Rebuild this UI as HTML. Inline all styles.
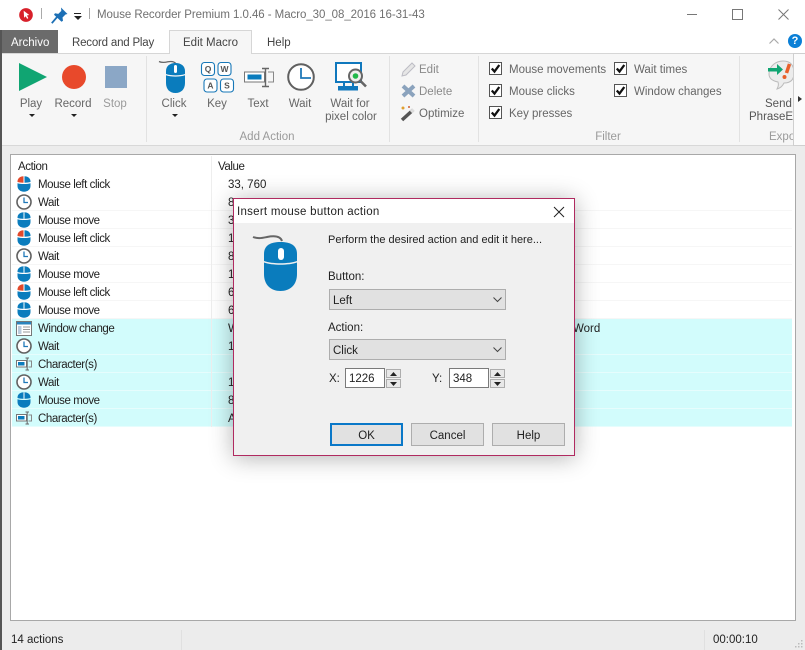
<!DOCTYPE html>
<html><head><meta charset="utf-8"><style>
html,body{margin:0;padding:0}
body{width:805px;height:650px;overflow:hidden;position:relative;background:#ececec;font-family:"Liberation Sans",sans-serif;font-size:11.5px;color:#222}
.t{position:absolute;white-space:nowrap;line-height:14px;margin-top:1px}
.r{font-size:11.5px;letter-spacing:-.42px}
.d{font-size:11px}
.b{position:absolute;box-sizing:border-box}
.c{text-align:center;transform:translateX(-50%)}
.g{color:#666}
.gl{color:#9a9a9a}
svg{position:absolute;overflow:visible}
</style></head><body>
<svg width="0" height="0" style="position:absolute"><defs>
<symbol id="m" viewBox="0 0 14 16"><path d="M.5 6V5.500C.5 2.500 3 .3 7 .3s6.500 2.200 6.500 5.200V6C10 7 4 7 .5 6z" fill="#0a7cbd"/><path d="M.5 7.200c3.500 1 9.500 1 13 0V10c0 3.500-2.900 5.700-6.500 5.700S.5 13.500.5 10z" fill="#0a7cbd"/><rect x="6.500" y=".3" width="1" height="6.500" fill="#fff"/></symbol>
<symbol id="ml" viewBox="0 0 14 16"><path d="M.5 6V5.500C.5 2.500 3 .3 6.500.3V6.700C4 6.700 2 6.400.5 6z" fill="#e2492b"/><path d="M7.500.3C11 .3 13.500 2.500 13.500 5.500V6C12 6.400 10 6.700 7.500 6.700z" fill="#0a7cbd"/><path d="M.5 7.200c3.500 1 9.500 1 13 0V10c0 3.500-2.900 5.700-6.500 5.700S.5 13.500.5 10z" fill="#0a7cbd"/></symbol>
<symbol id="w" viewBox="0 0 16 16"><circle cx="8" cy="8" r="7" fill="#fff" stroke="#606060" stroke-width="1.600"/><path d="M8 3.500V8.500H12" fill="none" stroke="#1f78b8" stroke-width="1.300"/></symbol>
<symbol id="ch" viewBox="0 0 16 14"><rect x=".5" y="3.500" width="10" height="6.500" fill="#fff" stroke="#777"/><rect x="2" y="5" width="6.500" height="3.500" fill="#0a7cbd"/><path d="M9.500 1H13M9.500 13H13M11.200 1V13" stroke="#666" fill="none"/><path d="M12.500 4H15.500V10H12.500" stroke="#888" fill="none"/></symbol>
<symbol id="wc" viewBox="0 0 16 15"><rect x=".5" y=".5" width="15" height="14" fill="#fff" stroke="#777"/><rect x="1" y="1" width="14" height="2.500" fill="#2a84bd"/><rect x="2" y="5" width="3.500" height="8" fill="#bcd"/><path d="M7 6H14M7 8.500H14M7 11H14" stroke="#999"/></symbol>
</defs></svg>

<!-- title bar -->
<div class="b" style="left:0;top:0;width:805px;height:53px;background:#fff"></div>
<svg style="left:19px;top:8px" width="14" height="14" viewBox="0 0 15 15"><circle cx="7.500" cy="7.500" r="7.300" fill="#d8202a"/><path d="M5 3l6 4.500-2.500.6 1.500 2.800-1.300.7-1.500-2.800L5.500 10.500z" fill="#fff"/></svg>
<div class="b" style="left:41px;top:8px;width:1px;height:11px;background:#aaa"></div>
<svg style="left:51px;top:7px" width="17" height="17" viewBox="0 0 17 17"><path d="M.8 16.200L6.500 9.500" stroke="#1c6fb5" stroke-width="1.800"/><path d="M10 .5l6.500 6.500-2 .5-3 3 .5 3.300-1.500 1L3 7.800l1-1.500 3.300.6 3-3z" fill="#1c6fb5"/></svg>
<div class="b" style="left:74px;top:13px;width:7px;height:1px;background:#222"></div>
<svg style="left:74px;top:16px" width="8" height="4"><path d="M0 0H8L4 4z" fill="#222"/></svg>
<div class="b" style="left:89px;top:8px;width:1px;height:11px;background:#aaa"></div>
<div class="t" style="left:97px;top:7px;font-size:11.5px;color:#707070;letter-spacing:-.06px">Mouse Recorder Premium 1.0.46 - Macro_30_08_2016 16-31-43</div>
<div class="b" style="left:687px;top:14px;width:10px;height:1px;background:#777"></div>
<div class="b" style="left:732px;top:9px;width:11px;height:11px;border:1px solid #777"></div>
<svg style="left:778px;top:9px" width="11" height="11"><path d="M.5.500L10.500 10.500M10.500.500L.5 10.500" stroke="#777" fill="none"/></svg>

<!-- tabs -->
<div class="b" style="left:2px;top:30px;width:56px;height:23px;background:#6b6b6b"></div>
<div class="t" style="left:11px;top:35px;color:#fff">Archivo</div>
<div class="t" style="left:72px;top:35px;color:#444;letter-spacing:-.2px">Record and Play</div>
<div class="b" style="left:169px;top:30px;width:83px;height:24px;background:#f6f6f6;border:1px solid #d6d6d6;border-bottom:none;z-index:2"></div>
<div class="t" style="left:183px;top:35px;color:#444;z-index:3">Edit Macro</div>
<div class="t" style="left:267px;top:35px;color:#444">Help</div>
<svg style="left:769px;top:38px" width="10" height="6"><path d="M.5 5.500L5 1l4.500 4.500" stroke="#aaa" fill="none" stroke-width="1.200"/></svg>
<div class="b" style="left:788px;top:34px;width:14px;height:14px;border-radius:50%;background:#0a7fd6;color:#fff;font-size:11px;font-weight:bold;line-height:14px;text-align:center">?</div>

<!-- ribbon -->
<div class="b" style="left:2px;top:53px;width:803px;height:93px;background:#f6f6f6;border-top:1px solid #d6d6d6;border-bottom:1px solid #d8d8d8"></div>
<div class="b" style="left:146px;top:56px;width:1px;height:86px;background:#e2e2e2"></div>
<div class="b" style="left:389px;top:56px;width:1px;height:86px;background:#e2e2e2"></div>
<div class="b" style="left:478px;top:56px;width:1px;height:86px;background:#e2e2e2"></div>
<div class="b" style="left:739px;top:56px;width:1px;height:86px;background:#e2e2e2"></div>

<svg style="left:19px;top:63px" width="28" height="28"><path d="M0 0L28 14L0 28z" fill="#10a572"/></svg>
<div class="b" style="left:62px;top:65px;width:24px;height:24px;border-radius:50%;background:#e8492b"></div>
<div class="b" style="left:105px;top:66px;width:22px;height:22px;background:#8ba7c6"></div>
<div class="t c g" style="left:31px;top:96px">Play</div>
<div class="t c g" style="left:73px;top:96px">Record</div>
<div class="t c gl" style="left:115px;top:96px">Stop</div>
<svg style="left:29px;top:114px" width="6" height="3"><path d="M0 0H6L3 3z" fill="#222"/></svg>
<svg style="left:71px;top:114px" width="6" height="3"><path d="M0 0H6L3 3z" fill="#222"/></svg>

<!-- click icon -->
<svg style="left:159px;top:60px" width="28" height="34" viewBox="0 0 28 34"><path d="M0 1.500c3 1.500 6 1 9 .3 3-.6 6-.6 8 2" fill="none" stroke="#666" stroke-width="1.300"/><path d="M7 14V11C7 6 11 3 16.500 3S26 6 26 11v3c-5 1.800-14 1.800-19 0z" fill="#0a7cbd"/><path d="M7 15.300c5 1.800 14 1.800 19 0V23c0 6.500-4 10-9.500 10S7 29.500 7 23z" fill="#0a7cbd"/><rect x="15" y="5" width="3" height="8" rx="1.500" fill="#fff"/></svg>
<div class="t c g" style="left:174px;top:96px">Click</div>
<svg style="left:172px;top:114px" width="6" height="3"><path d="M0 0H6L3 3z" fill="#222"/></svg>

<!-- key -->
<svg style="left:201px;top:62px" width="33" height="31" viewBox="0 0 33 31" font-family="Liberation Sans" font-size="8.500" font-weight="bold" fill="#555" text-anchor="middle">
<g fill="#fff" stroke="#1878b8" stroke-width="1.100"><rect x=".5" y=".5" width="13" height="13" rx="3"/><rect x="17" y=".5" width="13" height="13" rx="3"/><rect x="3" y="17" width="13" height="13" rx="3"/><rect x="19.500" y="17" width="13" height="13" rx="3"/></g>
<text x="7" y="10">Q</text><text x="23.500" y="10">W</text><text x="9.500" y="26.500">A</text><text x="26" y="26.500">S</text></svg>
<div class="t c g" style="left:217px;top:96px">Key</div>

<!-- text -->
<svg style="left:244px;top:68px" width="31" height="20" viewBox="0 0 31 20"><rect x=".5" y="4" width="20" height="10" fill="#fff" stroke="#777"/><rect x="3.500" y="6.500" width="14" height="5" fill="#0a7cbd"/><path d="M18 .5H25M18 18.500H25M21.500.5V18.500" stroke="#666" fill="none" stroke-width="1.400"/><path d="M24 4H29.500V14H24" stroke="#888" fill="none"/></svg>
<div class="t c g" style="left:258px;top:96px">Text</div>

<!-- wait -->
<svg style="left:287px;top:63px" width="28" height="28" viewBox="0 0 28 28"><circle cx="14" cy="14" r="12.800" fill="#fff" stroke="#606060" stroke-width="2"/><path d="M14 5V15H24" fill="none" stroke="#1f78b8" stroke-width="1.800"/></svg>
<div class="t c g" style="left:300px;top:96px">Wait</div>

<!-- pixel -->
<svg style="left:335px;top:62px" width="33" height="29" viewBox="0 0 33 29"><rect x="1" y="1" width="25" height="19" fill="#fff" stroke="#1078bd" stroke-width="2"/><path d="M9 20v4M18 20v4" stroke="#1078bd" stroke-width="2"/><rect x="3" y="24" width="20" height="4.500" fill="#1078bd"/><circle cx="20.500" cy="14" r="6.500" fill="#eee" stroke="#666" stroke-width="2"/><circle cx="20.500" cy="14" r="2.800" fill="#1fb84a"/><path d="M25.500 19l5.500 5.500" stroke="#666" stroke-width="2.600"/></svg>
<div class="t c g" style="left:350px;top:96px">Wait for</div>
<div class="t c g" style="left:351px;top:109px">pixel color</div>
<div class="t c gl" style="left:267px;top:129px">Add Action</div>

<!-- edit group -->
<svg style="left:401px;top:62px" width="15" height="15"><path d="M1 14l1-4L11 1l3 3-9 9z" fill="#e6e6e6" stroke="#bcbcc4"/></svg>
<div class="t gl" style="left:419px;top:62px;color:#8a8a8a">Edit</div>
<svg style="left:401px;top:84px" width="15" height="14"><path d="M2 2L13 12M13 2L2 12" stroke="#8ba3bd" stroke-width="4"/></svg>
<div class="t" style="left:419px;top:84px;color:#8a8a8a">Delete</div>
<svg style="left:400px;top:105px" width="16" height="16"><path d="M2 15L13 5" stroke="#555" stroke-width="3.500"/><path d="M11 7L13.500 4.500" stroke="#ddd" stroke-width="3.500"/><circle cx="3" cy="3" r="1.500" fill="#e0a030"/><circle cx="9" cy="2" r="1" fill="#d06030"/></svg>
<div class="t g" style="left:419px;top:106px">Optimize</div>

<!-- checks -->
<div class="b" style="left:489px;top:62px;width:13px;height:13px;background:#fff;border:1px solid #555"><svg width="11" height="11" style="left:0;top:0"><path d="M1.800 5.500L4.500 8.500L9.300 2" stroke="#111" stroke-width="2.300" fill="none"/></svg></div>
<div class="t g" style="left:509px;top:62px">Mouse movements</div>
<div class="b" style="left:489px;top:84px;width:13px;height:13px;background:#fff;border:1px solid #555"><svg width="11" height="11" style="left:0;top:0"><path d="M1.800 5.500L4.500 8.500L9.300 2" stroke="#111" stroke-width="2.300" fill="none"/></svg></div>
<div class="t g" style="left:509px;top:84px">Mouse clicks</div>
<div class="b" style="left:489px;top:106px;width:13px;height:13px;background:#fff;border:1px solid #555"><svg width="11" height="11" style="left:0;top:0"><path d="M1.800 5.500L4.500 8.500L9.300 2" stroke="#111" stroke-width="2.300" fill="none"/></svg></div>
<div class="t g" style="left:509px;top:106px">Key presses</div>
<div class="b" style="left:614px;top:62px;width:13px;height:13px;background:#fff;border:1px solid #555"><svg width="11" height="11" style="left:0;top:0"><path d="M1.800 5.500L4.500 8.500L9.300 2" stroke="#111" stroke-width="2.300" fill="none"/></svg></div>
<div class="t g" style="left:634px;top:62px">Wait times</div>
<div class="b" style="left:614px;top:84px;width:13px;height:13px;background:#fff;border:1px solid #555"><svg width="11" height="11" style="left:0;top:0"><path d="M1.800 5.500L4.500 8.500L9.300 2" stroke="#111" stroke-width="2.300" fill="none"/></svg></div>
<div class="t g" style="left:634px;top:84px">Window changes</div>
<div class="t c gl" style="left:608px;top:129px">Filter</div>

<!-- export -->
<svg style="left:768px;top:60px" width="26" height="32" viewBox="0 0 26 32"><path d="M1 14C1 6 8 1 15 1s11 4 11 12-5 10-10 10c-1 2-3 5-7 6 1-2 2-4 1-7-5-1-9-3-9-8z" fill="#ececec" stroke="#bbb"/><path d="M0 8h9V4l6 5.500-6 5.500v-3.500H0z" fill="#10a572"/><path d="M21.500 4l-3 9" stroke="#e8602b" stroke-width="3.500"/><circle cx="16.500" cy="17" r="2" fill="#e8602b"/></svg>
<div class="t" style="left:765px;top:96px;color:#555">Send</div>
<div class="t" style="left:749px;top:109px;color:#555">PhraseEx</div>
<div class="t gl" style="left:769px;top:129px">Expo</div>
<div class="b" style="left:793px;top:53px;width:12px;height:93px;background:#fbfbfb;border:1px solid #cfcfcf;border-right:none"></div>
<svg style="left:798px;top:96px" width="4" height="6"><path d="M0 0L4 3L0 6z" fill="#333"/></svg>

<!-- table -->
<div class="b" style="left:10px;top:154px;width:786px;height:467px;background:#fff;border:1px solid #a8a8a8"></div>
<div class="t r" style="left:18px;top:159px">Action</div>
<div class="t r" style="left:218px;top:159px">Value</div>
<div class="b" style="left:12px;top:319px;width:780px;height:108px;background:#d2fcfc"></div>
<div class="b" style="left:12px;top:193px;width:780px;height:126px;background:repeating-linear-gradient(#fff 0,#fff 17px,#f6f6f6 17px,#f6f6f6 18px)"></div>
<div class="b" style="left:12px;top:337px;width:780px;height:90px;background:repeating-linear-gradient(transparent 0,transparent 17px,#e6fdfd 17px,#e6fdfd 18px)"></div>
<div class="b" style="left:211px;top:156px;width:1px;height:271px;background:#eee"></div>

<svg style="left:17px;top:176px" width="14" height="16"><use href="#ml"/></svg><div class="t r" style="left:38px;top:177px">Mouse left click</div><div class="t" style="left:228px;top:177px">33, 760</div>
<svg style="left:16px;top:194px" width="16" height="16"><use href="#w"/></svg><div class="t r" style="left:38px;top:195px">Wait</div><div class="t" style="left:228px;top:195px">8</div>
<svg style="left:17px;top:212px" width="14" height="16"><use href="#m"/></svg><div class="t r" style="left:38px;top:213px">Mouse move</div><div class="t" style="left:228px;top:213px">3</div>
<svg style="left:17px;top:230px" width="14" height="16"><use href="#ml"/></svg><div class="t r" style="left:38px;top:231px">Mouse left click</div><div class="t" style="left:228px;top:231px">1</div>
<svg style="left:16px;top:248px" width="16" height="16"><use href="#w"/></svg><div class="t r" style="left:38px;top:249px">Wait</div><div class="t" style="left:228px;top:249px">8</div>
<svg style="left:17px;top:266px" width="14" height="16"><use href="#m"/></svg><div class="t r" style="left:38px;top:267px">Mouse move</div><div class="t" style="left:228px;top:267px">1</div>
<svg style="left:17px;top:284px" width="14" height="16"><use href="#ml"/></svg><div class="t r" style="left:38px;top:285px">Mouse left click</div><div class="t" style="left:228px;top:285px">6</div>
<svg style="left:17px;top:302px" width="14" height="16"><use href="#m"/></svg><div class="t r" style="left:38px;top:303px">Mouse move</div><div class="t" style="left:228px;top:303px">6</div>
<svg style="left:16px;top:321px" width="16" height="15"><use href="#wc"/></svg><div class="t r" style="left:38px;top:321px">Window change</div><div class="t" style="left:228px;top:321px">W</div><div class="t" style="left:573px;top:321px">Word</div>
<svg style="left:16px;top:338px" width="16" height="16"><use href="#w"/></svg><div class="t r" style="left:38px;top:339px">Wait</div><div class="t" style="left:228px;top:339px">1</div>
<svg style="left:16px;top:357px" width="16" height="14"><use href="#ch"/></svg><div class="t r" style="left:38px;top:357px">Character(s)</div>
<svg style="left:16px;top:374px" width="16" height="16"><use href="#w"/></svg><div class="t r" style="left:38px;top:375px">Wait</div><div class="t" style="left:228px;top:375px">1</div>
<svg style="left:17px;top:392px" width="14" height="16"><use href="#m"/></svg><div class="t r" style="left:38px;top:393px">Mouse move</div><div class="t" style="left:228px;top:393px">8</div>
<svg style="left:16px;top:411px" width="16" height="14"><use href="#ch"/></svg><div class="t r" style="left:38px;top:411px">Character(s)</div><div class="t" style="left:228px;top:411px">A</div>

<!-- left dark edge -->
<div class="b" style="left:0;top:30px;width:2px;height:620px;background:#555"></div>

<!-- status -->
<div class="t" style="left:11px;top:632px">14 actions</div>
<div class="b" style="left:181px;top:630px;width:1px;height:20px;background:#e0e0e0"></div>
<div class="b" style="left:704px;top:630px;width:1px;height:20px;background:#e0e0e0"></div>
<div class="t" style="left:713px;top:632px">00:00:10</div>
<svg style="left:795px;top:640px" width="8" height="8"><path d="M6 0h1.500v1.500H6zM3 3h1.500v1.500H3zM6 3h1.500v1.500H6zM0 6h1.500v1.500H0zM3 6h1.500v1.500H3zM6 6h1.500v1.500H6z" fill="#bbb"/></svg>

<!-- dialog -->
<div class="b" style="left:233px;top:198px;width:342px;height:258px;background:#f0f0f0;border:1px solid #b02a60;box-shadow:0 2px 22px rgba(0,0,0,.3);z-index:5">
<div class="b" style="left:0;top:0;width:340px;height:24px;background:#fff"></div>
<div class="t" style="left:3px;top:5px;letter-spacing:.27px">Insert mouse button action</div>
<svg style="left:320px;top:8px" width="10" height="10"><path d="M0 0L10 10M10 0L0 10" stroke="#222" fill="none"/></svg>
<svg style="left:19px;top:36px" width="46" height="57" viewBox="0 0 46 57"><path d="M0 2c5 2 9 1 14 0 5-1 13-2 15 4" fill="none" stroke="#666" stroke-width="2"/><path d="M11 26V19C11 10 18 7 27.500 7S44 10 44 19v7c-8 3-25 3-33 0z" fill="#0a7cbd"/><path d="M11 27.500c8 3 25 3 33 0V39c0 11-7 17-16.500 17S11 50 11 39z" fill="#0a7cbd"/><rect x="25" y="13" width="6" height="12" rx="3" fill="#fff"/></svg>
<div class="t d" style="left:94px;top:33px">Perform the desired action and edit it here...</div>
<div class="t" style="left:94px;top:70px">Button:</div>
<div class="b" style="left:95px;top:90px;width:177px;height:21px;background:#e1e1e1;border:1px solid #adadad"><div class="t" style="left:3px;top:3px">Left</div><svg style="left:163px;top:7px" width="9" height="5"><path d="M.5.500L4.500 4.500L8.500.500" stroke="#444" fill="none"/></svg></div>
<div class="t" style="left:94px;top:121px">Action:</div>
<div class="b" style="left:95px;top:140px;width:177px;height:21px;background:#e1e1e1;border:1px solid #adadad"><div class="t" style="left:3px;top:3px">Click</div><svg style="left:163px;top:7px" width="9" height="5"><path d="M.5.500L4.500 4.500L8.500.500" stroke="#444" fill="none"/></svg></div>
<div class="t" style="left:95px;top:172px">X:</div>
<div class="b" style="left:111px;top:169px;width:40px;height:20px;background:#fff;border:1px solid #7a7a7a"><div class="t" style="left:3px;top:2px">1226</div></div>
<div class="b" style="left:152px;top:170px;width:15px;height:9px;background:#e8e8e8;border:1px solid #adadad"></div><svg style="left:156px;top:173px" width="7" height="4"><path d="M0 4L3.500 0L7 4z" fill="#222"/></svg>
<div class="b" style="left:152px;top:180px;width:15px;height:9px;background:#e8e8e8;border:1px solid #adadad"></div><svg style="left:156px;top:183px" width="7" height="4"><path d="M0 0L3.500 4L7 0z" fill="#222"/></svg>
<div class="t" style="left:198px;top:172px">Y:</div>
<div class="b" style="left:215px;top:169px;width:40px;height:20px;background:#fff;border:1px solid #7a7a7a"><div class="t" style="left:3px;top:2px">348</div></div>
<div class="b" style="left:256px;top:170px;width:15px;height:9px;background:#e8e8e8;border:1px solid #adadad"></div><svg style="left:260px;top:173px" width="7" height="4"><path d="M0 4L3.500 0L7 4z" fill="#222"/></svg>
<div class="b" style="left:256px;top:180px;width:15px;height:9px;background:#e8e8e8;border:1px solid #adadad"></div><svg style="left:260px;top:183px" width="7" height="4"><path d="M0 0L3.500 4L7 0z" fill="#222"/></svg>
<div class="b" style="left:96px;top:224px;width:73px;height:23px;background:#e1e1e1;border:2px solid #0a78c8;text-align:center;line-height:22px">OK</div>
<div class="b" style="left:177px;top:224px;width:73px;height:23px;background:#e1e1e1;border:1px solid #adadad;text-align:center;line-height:24px">Cancel</div>
<div class="b" style="left:258px;top:224px;width:73px;height:23px;background:#e1e1e1;border:1px solid #adadad;text-align:center;line-height:24px">Help</div>
</div>
</body></html>
